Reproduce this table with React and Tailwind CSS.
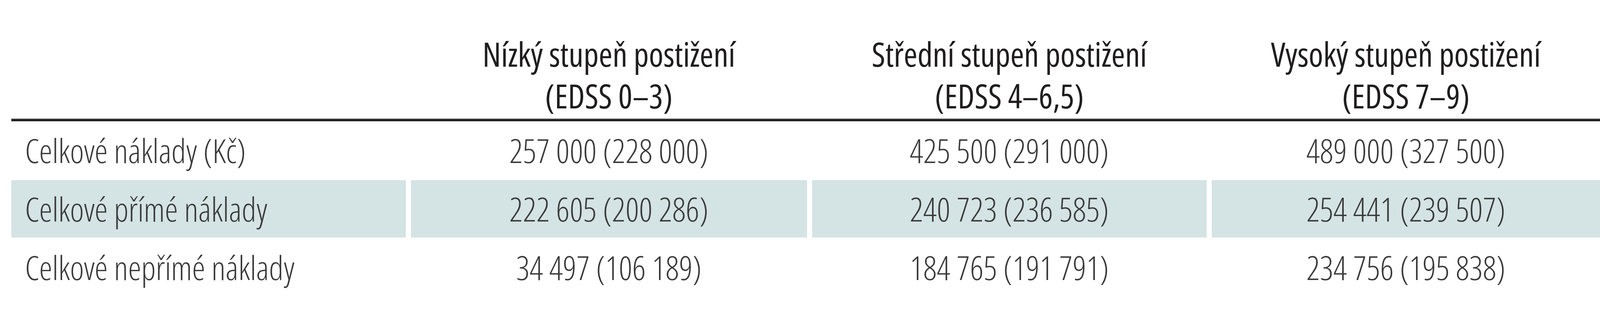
import React from 'react';

const columns = [
  { title: 'Nízký stupeň postižení', range: '(EDSS 0–3)' },
  { title: 'Střední stupeň postižení', range: '(EDSS 4–6,5)' },
  { title: 'Vysoký stupeň postižení', range: '(EDSS 7–9)' },
];

const rows = [
  { label: 'Celkové náklady (Kč)', values: ['257 000 (228 000)', '425 500 (291 000)', '489 000 (327 500)'] },
  { label: 'Celkové přímé náklady', values: ['222 605 (200 286)', '240 723 (236 585)', '254 441 (239 507)'], shaded: true },
  { label: 'Celkové nepřímé náklady', values: ['34 497 (106 189)', '184 765 (191 791)', '234 756 (195 838)'] },
];

// column widths kept proportional so the table always spans the full page width
const grid = 'grid grid-cols-[1272fr_1277fr_1273fr_1252fr] gap-x-[13px]';

function App() {
  return (
    <div className="min-h-[800px] w-full bg-white pl-[29px] font-['Open_Sans',sans-serif] font-stretch-semi-condensed">
      {/* header */}
      <div className={`${grid} h-[303px]`}>
        <div />
        {columns.map((col) => (
          <div
            key={col.title}
            className="flex flex-col items-center justify-end pb-[4px] text-[85px] leading-[107px] font-medium text-[#1f1d1e] whitespace-nowrap"
          >
            <span>{col.title}</span>
            <span>{col.range}</span>
          </div>
        ))}
      </div>

      {/* rule under header */}
      <div className="h-[8px] border-t-2 border-[#bdbdbd] bg-[#222]" />

      {/* body rows */}
      <div className="flex flex-col gap-[3px] pt-px">
        {rows.map((row) => {
          const cell = row.shaded ? 'bg-[#d4e3e3]' : '';
          return (
            <div key={row.label} className={`${grid} h-[147px] text-[85px] leading-[147px] font-light text-[#3a3a3a] whitespace-nowrap`}>
              <div className={`${cell} pl-[35px]`}>{row.label}</div>
              {row.values.map((v, i) => (
                <div key={i} className={`${cell} text-center`}>
                  {v}
                </div>
              ))}
            </div>
          );
        })}
      </div>
    </div>
  );
}

export default App;
